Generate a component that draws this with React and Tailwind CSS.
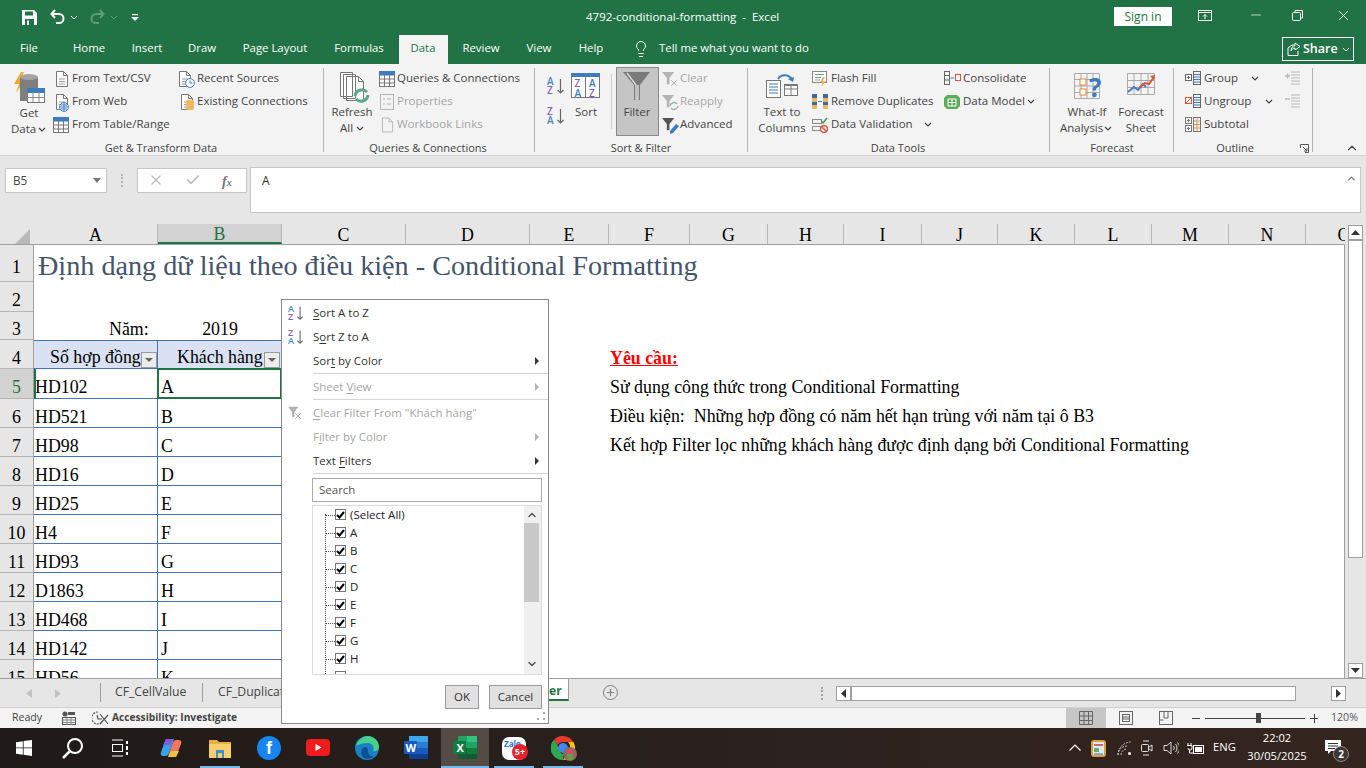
import {
  ChevronDown, ChevronUp, Minus, Plus, X, Lightbulb, Check,
} from 'lucide-react';

const ui = 'font-[Open_Sans,sans-serif]';

// absolute text, vertically centred on its top value
const T = ({ className = '', children }) => (
  <span className={`absolute -translate-y-1/2 whitespace-pre leading-none ${className}`}>{children}</span>
);

const Chev = ({ className = '' }) => (
  <svg className={`absolute ${className}`} width="8" height="5" viewBox="0 0 8 5" fill="none" stroke="#444" strokeWidth="1.2">
    <path d="M1 1l3 3 3-3" />
  </svg>
);

const Sep = ({ className = '' }) => <div className={`absolute top-[68px] h-[84px] w-px bg-[#b3b3b3] ${className}`} />;

const SortIcon = ({ className = '', down = false, size = 20 }) => (
  <svg className={`absolute ${className}`} width={size} height={size} viewBox="0 0 20 20">
    <text x="1" y="9" fontSize="10" fontWeight="600" fontFamily="Open Sans" fill={down ? '#8a5fb5' : '#4a86c5'}>{down ? 'Z' : 'A'}</text>
    <text x="1" y="18" fontSize="10" fontWeight="600" fontFamily="Open Sans" fill={down ? '#4a86c5' : '#8a5fb5'}>{down ? 'A' : 'Z'}</text>
    <path d="M14.5 3v14M11.5 14l3 3 3-3" stroke="#666" strokeWidth="1.2" fill="none" />
  </svg>
);

const Page = ({ className = '' }) => (
  <svg className={`absolute ${className}`} width="14" height="16" viewBox="0 0 14 16" fill="#fff" stroke="#777">
    <path d="M1.5.5h7l4 4v11h-11z" />
    <path d="M8.5.5v4h4" fill="none" />
    <path d="M4 8h6M4 10.5h6M4 13h6" stroke="#999" />
  </svg>
);

const TableIco = ({ className = '', w = 16, h = 16 }) => (
  <svg className={`absolute ${className}`} width={w} height={h} viewBox="0 0 16 16" fill="#fff" stroke="#777">
    <rect x=".5" y=".5" width="15" height="15" />
    <rect x=".5" y=".5" width="15" height="3.5" fill="#3f7cbd" stroke="#3f7cbd" />
    <path d="M.5 8h15M.5 12h15M5.5 4v12M10.5 4v12" />
  </svg>
);

const Funnel = ({ className = '', color = '#7a7a7a', size = 16 }) => (
  <svg className={`absolute ${className}`} width={size} height={size} viewBox="0 0 16 16" fill={color}>
    <path d="M0 1h14L8.5 8v7h-3V8z" />
  </svg>
);

const Ribbon = () => (
  <div className="absolute left-0 top-[64px] h-[92px] w-[1366px] border-b border-[#d2d2d2] bg-[#f3f3f3]" />
);

const RibbonContent = () => (
  <div className={`absolute inset-0 text-[11.500px] text-[#444] ${ui}`}>
    {/* Get & Transform */}
    <svg className="absolute left-[12px] top-[71px]" width="34" height="34" viewBox="0 0 34 34">
      <path d="M9 1L2 13h5l-3 9 9-13H8l4-8z" fill="#f0a830" />
      <path d="M8 6h18v24H8z" fill="#7f7f7f" />
      <ellipse cx="17" cy="6" rx="9" ry="3" fill="#a5a5a5" />
      <rect x="15.500" y="17.500" width="17" height="14" fill="#fff" stroke="#777" />
      <rect x="15.500" y="17.500" width="17" height="4" fill="#3f7cbd" stroke="#3f7cbd" />
      <path d="M15.500 26.500h17M21 21v10M27 21v10" stroke="#888" fill="none" />
    </svg>
    <T className="left-[29px] top-[113px] -translate-x-1/2">Get</T>
    <T className="left-[11px] top-[129px]">Data</T>
    <Chev className="left-[38px] top-[127px]" />
    <Page className="left-[55px] top-[71px]" />
    <T className="left-[72px] top-[78px]">From Text/CSV</T>
    <Page className="left-[55px] top-[94px]" />
    <svg className="absolute left-[59px] top-[102px]" width="10" height="10" viewBox="0 0 10 10" fill="#fff" stroke="#3f7cbd">
      <circle cx="5" cy="5" r="4.400" /><path d="M1 5h8M5 1v8M2 3h6M2 7h6" />
    </svg>
    <T className="left-[72px] top-[101px]">From Web</T>
    <TableIco className="left-[53px] top-[117px]" />
    <T className="left-[72px] top-[124px]">From Table/Range</T>
    <Page className="left-[178px] top-[71px]" />
    <svg className="absolute left-[185px] top-[78px]" width="10" height="10" viewBox="0 0 10 10" fill="#fff" stroke="#3f7cbd">
      <circle cx="5" cy="5" r="4.400" /><path d="M5 2.500V5h2.500" />
    </svg>
    <T className="left-[197px] top-[78px]">Recent Sources</T>
    <Page className="left-[180px] top-[94px]" />
    <svg className="absolute left-[186px] top-[100px]" width="8" height="10" viewBox="0 0 8 10">
      <rect width="8" height="10" rx="2" fill="#f0b860" />
    </svg>
    <T className="left-[197px] top-[101px]">Existing Connections</T>
    <T className="left-[161px] top-[147px] -translate-x-1/2 text-[11px]">Get &amp; Transform Data</T>
    <Sep className="left-[323px]" />

    {/* Queries */}
    <svg className="absolute left-[339px] top-[71px]" width="32" height="34" viewBox="0 0 32 34" fill="#fff" stroke="#777">
      <path d="M1.500 1.500h12v24h-12zM4.500 3.500h12v24h-12zM7.500 5.500h12l5 5v19h-17z" />
      <path d="M19.500 5.500v5h5" fill="none" />
      <path d="M16 25a7 7 0 0 1 12-4M29 24a7 7 0 0 1-12 4" fill="none" stroke="#5aa98a" strokeWidth="3" />
    </svg>
    <T className="left-[352px] top-[112px] -translate-x-1/2">Refresh</T>
    <T className="left-[340px] top-[128px]">All</T>
    <Chev className="left-[356px] top-[126px]" />
    <TableIco className="left-[379px] top-[71px]" />
    <T className="left-[397px] top-[78px]">Queries &amp; Connections</T>
    <svg className="absolute left-[380px] top-[94px]" width="14" height="16" viewBox="0 0 14 16" fill="none" stroke="#b5b5b5">
      <rect x=".5" y=".5" width="13" height="15" />
      <path d="M3 5h2M7 5h4M3 10h2M7 10h4" />
    </svg>
    <T className="left-[397px] top-[101px] text-[#a6a6a6]">Properties</T>
    <svg className="absolute left-[381px] top-[117px]" width="13" height="16" viewBox="0 0 14 16" fill="none" stroke="#b5b5b5">
      <path d="M1.500.5h7l4 4v11h-11z" /><path d="M8.500.5v4h4" />
    </svg>
    <T className="left-[397px] top-[124px] text-[#a6a6a6]">Workbook Links</T>
    <T className="left-[428px] top-[147px] -translate-x-1/2 text-[11px]">Queries &amp; Connections</T>
    <Sep className="left-[534px]" />

    {/* Sort & Filter */}
    <SortIcon className="left-[546px] top-[76px]" />
    <SortIcon down className="left-[546px] top-[106px]" />
    <svg className="absolute left-[571px] top-[73px]" width="29" height="25" viewBox="0 0 29 25">
      <rect x=".5" y=".5" width="28" height="24" fill="#fff" stroke="#777" />
      <rect x="0" y="0" width="29" height="4" fill="#3f7cbd" />
      <path d="M14.500 4v21" stroke="#777" />
      <text x="3.500" y="14" fontSize="10" fontWeight="600" fontFamily="Open Sans" fill="#8a5fb5">Z</text>
      <text x="3.500" y="24" fontSize="10" fontWeight="600" fontFamily="Open Sans" fill="#3f7cbd">A</text>
      <text x="18" y="14" fontSize="10" fontWeight="600" fontFamily="Open Sans" fill="#3f7cbd">A</text>
      <text x="18" y="24" fontSize="10" fontWeight="600" fontFamily="Open Sans" fill="#8a5fb5">Z</text>
    </svg>
    <T className="left-[586px] top-[112px] -translate-x-1/2">Sort</T>
    <div className="absolute left-[611px] top-[74px] h-[55px] w-px bg-[#d0d0d0]" />
    <div className="absolute left-[616px] top-[67px] h-[69px] w-[43px] border border-[#8a8a8a] bg-[#c5c5c5]" />
    <svg className="absolute left-[622px] top-[71px]" width="30" height="29" viewBox="0 0 30 29">
      <path d="M1 1h27L18 14v15h-6V14z" fill="#7a7a7a" />
      <path d="M5 2l9 12v14h2V14" stroke="#d8d8d8" strokeWidth="1.500" fill="none" />
    </svg>
    <T className="left-[637px] top-[112px] -translate-x-1/2">Filter</T>
    <Funnel color="#b3b3b3" size={14} className="left-[662px] top-[71px]" />
    <X className="absolute left-[669px] top-[78px]" size={10} color="#a0a0a0" />
    <T className="left-[680px] top-[78px] text-[#a6a6a6]">Clear</T>
    <Funnel color="#b3b3b3" size={14} className="left-[662px] top-[94px]" />
    <svg className="absolute left-[669px] top-[101px]" width="10" height="10" viewBox="0 0 10 10" fill="none" stroke="#9db5ac" strokeWidth="1.500">
      <path d="M1 5a4 4 0 0 1 7-2M9 5a4 4 0 0 1-7 2" />
    </svg>
    <T className="left-[680px] top-[101px] text-[#a6a6a6]">Reapply</T>
    <Funnel color="#555" size={14} className="left-[662px] top-[117px]" />
    <svg className="absolute left-[669px] top-[123px]" width="11" height="11" viewBox="0 0 11 11" fill="#3f7cbd">
      <path d="M1 8l6-7 3 2-6 7-3 1z" />
    </svg>
    <T className="left-[680px] top-[124px]">Advanced</T>
    <T className="left-[641px] top-[147px] -translate-x-1/2 text-[11px]">Sort &amp; Filter</T>
    <Sep className="left-[747px]" />

    {/* Data Tools */}
    <svg className="absolute left-[766px] top-[71px]" width="33" height="27" viewBox="0 0 33 27" fill="none">
      <path d="M12 8a8 8 0 0 1 14 1" stroke="#3f7cbd" strokeWidth="2" />
      <path d="M22 8l5 3 1-5z" fill="#3f7cbd" />
      <rect x=".5" y="9.500" width="14" height="17" fill="#fff" stroke="#777" />
      <path d="M3 13h9M3 16h9M3 19h9M3 22h9" stroke="#3f7cbd" />
      <rect x="18.500" y="13.500" width="13" height="11" fill="#fff" stroke="#777" />
      <path d="M18 18h14M25 14v10" stroke="#777" />
      <rect x="18" y="13" width="14" height="2" fill="#777" />
    </svg>
    <T className="left-[782px] top-[112px] -translate-x-1/2">Text to</T>
    <T className="left-[782px] top-[128px] -translate-x-1/2">Columns</T>
    <svg className="absolute left-[812px] top-[71px]" width="16" height="16" viewBox="0 0 16 16" fill="none" stroke="#888">
      <rect x=".5" y=".5" width="14" height="11" fill="#fff" />
      <path d="M3 3.500h9M3 6.500h6M3 9h5" stroke="#6ea47f" />
      <path d="M11 6l-3 5h2.500L9 16l5-6h-3l2-4z" fill="#f0b860" stroke="none" />
    </svg>
    <T className="left-[831px] top-[78px]">Flash Fill</T>
    <svg className="absolute left-[812px] top-[94px]" width="16" height="15" viewBox="0 0 16 15">
      <rect width="5" height="15" fill="#e8b868" />
      <rect x="11" width="5" height="15" fill="#e8b868" />
      <rect width="5" height="4" fill="#3f6a9c" />
      <rect x="11" width="5" height="4" fill="#3f6a9c" />
      <rect y="8" width="5" height="3" fill="#3f6a9c" />
      <rect x="11" y="8" width="5" height="3" fill="#3f6a9c" />
      <path d="M6 7.500h4" stroke="#3f7cbd" />
    </svg>
    <T className="left-[831px] top-[101px]">Remove Duplicates</T>
    <svg className="absolute left-[812px] top-[117px]" width="16" height="16" viewBox="0 0 16 16" fill="none">
      <rect x=".5" y="2.500" width="9" height="4" stroke="#888" />
      <rect x=".5" y="9.500" width="8" height="4" stroke="#888" />
      <path d="M9 4l2 2 4-5" stroke="#3d9a6a" strokeWidth="1.500" />
      <circle cx="12" cy="12" r="3.500" stroke="#d9573b" strokeWidth="1.500" />
      <path d="M9.500 9.500l5 5" stroke="#d9573b" strokeWidth="1.500" />
    </svg>
    <T className="left-[831px] top-[124px]">Data Validation</T>
    <Chev className="left-[924px] top-[122px]" />
    <svg className="absolute left-[944px] top-[71px]" width="17" height="14" viewBox="0 0 17 14" fill="none">
      <rect x=".5" y=".5" width="5" height="13" stroke="#666" />
      <path d="M1 4.500h4M1 9h4" stroke="#666" />
      <path d="M6.500 7H10" stroke="#3f7cbd" />
      <rect x="11.500" y="3.500" width="5" height="6" stroke="#d9573b" />
    </svg>
    <T className="left-[963px] top-[78px]">Consolidate</T>
    <svg className="absolute left-[944px] top-[94px]" width="16" height="16" viewBox="0 0 16 16">
      <path d="M3 1h10l3 3v8l-3 3H3l-3-3V4z" fill="#5cae5c" />
      <path d="M4 5h8v7H4zM8 5v7M4 8.500h8" stroke="#fff" fill="none" />
    </svg>
    <T className="left-[963px] top-[101px]">Data Model</T>
    <Chev className="left-[1027px] top-[99px]" />
    <T className="left-[898px] top-[147px] -translate-x-1/2 text-[11px]">Data Tools</T>
    <Sep className="left-[1049px]" />

    {/* Forecast */}
    <svg className="absolute left-[1074px] top-[73px]" width="30" height="27" viewBox="0 0 30 27" fill="none">
      <path d="M.5.500h25v25H.5zM.5 6.500h25M.5 13h25M.5 19.500h25M7 .5v25M13 .5v25M19 .5v25" stroke="#aaa" />
      <rect x="6" y="6" width="6" height="6" stroke="#e8893a" fill="#fff" />
      <rect x="6" y="16" width="6" height="6" stroke="#e8893a" fill="#fff" />
      <text x="15" y="24" fontSize="26" fontWeight="700" fontFamily="Open Sans" fill="#3f7cbd">?</text>
    </svg>
    <T className="left-[1087px] top-[112px] -translate-x-1/2">What-If</T>
    <T className="left-[1060px] top-[128px]">Analysis</T>
    <Chev className="left-[1104px] top-[126px]" />
    <svg className="absolute left-[1127px] top-[73px]" width="29" height="26" viewBox="0 0 29 26" fill="none">
      <path d="M.5.500h27v21H.5zM.5 7.500h27M.5 14.500h27M7 .5v21M14 .5v21M21 .5v21" stroke="#aaa" />
      <path d="M1 19l6-5 4 3 5-6 3 3" stroke="#3f7cbd" strokeWidth="2" />
      <path d="M12 15l6-5 4 1 5-7" stroke="#d9573b" strokeWidth="2" />
      <path d="M23 3l5-1-1 5z" fill="#d9573b" />
    </svg>
    <T className="left-[1141px] top-[112px] -translate-x-1/2">Forecast</T>
    <T className="left-[1141px] top-[128px] -translate-x-1/2">Sheet</T>
    <T className="left-[1112px] top-[147px] -translate-x-1/2 text-[11px]">Forecast</T>
    <Sep className="left-[1173px]" />

    {/* Outline */}
    <svg className="absolute left-[1185px] top-[71px]" width="16" height="14" viewBox="0 0 16 14" fill="none">
      <rect x=".5" y="3.500" width="6" height="6" stroke="#666" />
      <path d="M2 6.500h3M3.500 5v3" stroke="#666" />
      <rect x="8.500" y=".5" width="7" height="13" stroke="#666" />
      <path d="M9 3.500h6M9 6h6M9 8.500h6M9 11h6" stroke="#3f7cbd" />
    </svg>
    <T className="left-[1204px] top-[78px]">Group</T>
    <Chev className="left-[1251px] top-[76px]" />
    <svg className="absolute left-[1185px] top-[94px]" width="16" height="14" viewBox="0 0 16 14" fill="none">
      <rect x=".5" y="3.500" width="6" height="6" stroke="#d9573b" />
      <path d="M1 9l5-5" stroke="#d9573b" />
      <rect x="8.500" y=".5" width="7" height="13" stroke="#666" />
      <path d="M9 3.500h6M9 6h6M9 8.500h6M9 11h6" stroke="#3f7cbd" />
    </svg>
    <T className="left-[1204px] top-[101px]">Ungroup</T>
    <Chev className="left-[1265px] top-[99px]" />
    <svg className="absolute left-[1185px] top-[117px]" width="16" height="15" viewBox="0 0 16 15" fill="none" stroke="#777">
      <rect x=".5" y=".5" width="6" height="6" />
      <rect x=".5" y="8.500" width="6" height="6" />
      <path d="M2 3.500h3M3.500 2v3M2 11.500h3M3.500 10v3" />
      <rect x="8.500" y=".5" width="7" height="14" />
      <path d="M9 4h6M9 7.500h6M9 11h6M12 1v13" stroke="#d99a55" />
    </svg>
    <T className="left-[1204px] top-[124px]">Subtotal</T>
    <svg className="absolute left-[1285px] top-[71px]" width="16" height="14" viewBox="0 0 16 14" fill="none" stroke="#b8b8b8">
      <path d="M6 1h9M6 4h9M6 7h9M6 10h9M6 13h9" />
      <path d="M0 5h5M2.500 2.500v5" strokeWidth="1.500" />
    </svg>
    <svg className="absolute left-[1285px] top-[94px]" width="16" height="14" viewBox="0 0 16 14" fill="none" stroke="#b8b8b8">
      <path d="M6 1h9M6 4h9M6 7h9M6 10h9M6 13h9" />
      <path d="M0 5h5" strokeWidth="1.500" />
    </svg>
    <T className="left-[1235px] top-[147px] -translate-x-1/2 text-[11px]">Outline</T>
    <svg className="absolute left-[1300px] top-[144px]" width="9" height="9" viewBox="0 0 9 9" fill="none" stroke="#555">
      <path d="M.5 4V.5h8v8H5M3 3l4 4M7 4v3H4" />
    </svg>
    <Sep className="left-[1312px]" />
    <ChevronUp className="absolute left-[1345px] top-[141px]" size={14} color="#444" />
  </div>
);

const TitleBar = () => (
  <div className={`absolute left-0 top-0 h-[64px] w-[1366px] bg-[#217346] text-white ${ui}`}>
    <svg className="absolute left-[22px] top-[10px]" width="15" height="15" viewBox="0 0 15 15">
      <path d="M0 0h12l3 3v12H0z" fill="#fff" />
      <rect x="3" y="1.500" width="8" height="4" fill="#217346" />
      <rect x="3" y="9" width="9" height="6" fill="#217346" />
      <rect x="5" y="10.500" width="2" height="4.500" fill="#fff" />
    </svg>
    <svg className="absolute left-[50px] top-[9px]" width="15" height="16" viewBox="0 0 15 16" fill="none" stroke="#fff" strokeWidth="2">
      <path d="M5 1L1.500 5 5 9M2 5h7a4.500 4.500 0 0 1 0 9H6" />
    </svg>
    <svg className="absolute left-[70px] top-[15px]" width="8" height="5" viewBox="0 0 8 5" fill="none" stroke="#fff">
      <path d="M1 1l3 3 3-3" />
    </svg>
    <svg className="absolute left-[90px] top-[9px]" width="15" height="16" viewBox="0 0 15 16" fill="none" stroke="#5f9c7c" strokeWidth="2">
      <path d="M10 1l3.500 4L10 9M13 5H6a4.500 4.500 0 0 0 0 9h3" />
    </svg>
    <svg className="absolute left-[110px] top-[15px]" width="8" height="5" viewBox="0 0 8 5" fill="none" stroke="#5f9c7c">
      <path d="M1 1l3 3 3-3" />
    </svg>
    <svg className="absolute left-[131px] top-[14px]" width="8" height="8" viewBox="0 0 8 8" fill="#fff">
      <rect x="1" width="6" height="1.200" /><path d="M0 3h8L4 7z" />
    </svg>
    <T className="left-[586px] top-[17px] text-[11.500px]">4792-conditional-formatting  -  Excel</T>
    <div className="absolute left-[1114px] top-[7px] flex h-[19px] w-[58px] items-center justify-center bg-white text-[12px] text-[#217346]">Sign in</div>
    <svg className="absolute left-[1198px] top-[10px]" width="14" height="11" viewBox="0 0 14 11" fill="none" stroke="#fff">
      <rect x=".5" y=".5" width="13" height="10" /><path d="M0 2.500h14M7 9V4.500M5 6.500l2-2 2 2" />
    </svg>
    <Minus className="absolute left-[1248px] top-[7px]" size={16} strokeWidth={1} />
    <svg className="absolute left-[1292px] top-[10px]" width="11" height="11" viewBox="0 0 11 11" fill="none" stroke="#fff">
      <rect x=".5" y="2.500" width="8" height="8" rx="1" /><path d="M3 2V.5h7.500V8H9" />
    </svg>
    <X className="absolute left-[1335px] top-[7px]" size={17} strokeWidth={1.2} />

    <div className="absolute left-[399px] top-[35px] h-[29px] w-[49px] bg-[#f3f3f3]" />
    <div className="text-[11.400px]">
      <T className="left-[29px] top-[48px] -translate-x-1/2">File</T>
      <T className="left-[89px] top-[48px] -translate-x-1/2">Home</T>
      <T className="left-[147px] top-[48px] -translate-x-1/2">Insert</T>
      <T className="left-[202px] top-[48px] -translate-x-1/2">Draw</T>
      <T className="left-[275px] top-[48px] -translate-x-1/2">Page Layout</T>
      <T className="left-[359px] top-[48px] -translate-x-1/2">Formulas</T>
      <T className="left-[423px] top-[48px] -translate-x-1/2 text-[#217346]">Data</T>
      <T className="left-[481px] top-[48px] -translate-x-1/2">Review</T>
      <T className="left-[539px] top-[48px] -translate-x-1/2">View</T>
      <T className="left-[591px] top-[48px] -translate-x-1/2">Help</T>
      <T className="left-[659px] top-[48px]">Tell me what you want to do</T>
    </div>
    <Lightbulb className="absolute left-[632px] top-[40px]" size={18} strokeWidth={1.3} />
    <div className="absolute left-[1282px] top-[37px] h-[24px] w-[72px] border border-white" />
    <svg className="absolute left-[1287px] top-[42px]" width="15" height="14" viewBox="0 0 15 14" fill="none" stroke="#fff">
      <path d="M1 6v7.500h10V9M1 6l4-3h2M8 1l5 3.500L8 8V6c-2 0-3 1-4 3 0-3 1.500-5 4-5.500z" />
    </svg>
    <T className="left-[1303px] top-[49px] text-[12.500px] font-semibold">Share</T>
    <svg className="absolute left-[1342px] top-[47px]" width="8" height="5" viewBox="0 0 8 5" fill="none" stroke="#fff">
      <path d="M1 1l3 3 3-3" />
    </svg>
  </div>
);

const FormulaBar = () => (
  <div className={`absolute left-0 top-[157px] h-[67px] w-[1366px] bg-[#e6e6e6] ${ui}`}>
    <div className="absolute left-[5px] top-[11px] flex h-[25px] w-[102px] items-center border border-[#c6c6c6] bg-white pl-[7px] text-[11.700px] text-[#444]">B5</div>
    <svg className="absolute left-[93px] top-[21px]" width="8" height="5" viewBox="0 0 8 5" fill="#777"><path d="M0 0h8L4 5z" /></svg>
    <div className="absolute left-[121px] top-[17px] h-[13px] w-[2px] border-l-2 border-dotted border-[#b5b5b5]" />
    <div className="absolute left-[137px] top-[11px] h-[25px] w-[110px] border border-[#c6c6c6] bg-white" />
    <X className="absolute left-[148px] top-[15px]" size={16} color="#bdbdbd" strokeWidth={2} />
    <Check className="absolute left-[185px] top-[15px]" size={16} color="#bdbdbd" strokeWidth={2.500} />
    <span className="absolute left-[222px] top-[14px] font-[Liberation_Serif,serif] text-[14px] font-bold italic text-[#777]">f<span className="text-[10px]">x</span></span>
    <div className="absolute left-[250px] top-[10px] h-[46px] w-[1111px] border border-[#c6c6c6] bg-white" />
    <T className="left-[262px] top-[24px] text-[12px] text-[#333]">A</T>
    <ChevronUp className="absolute left-[1346px] top-[16px]" size={11} color="#777" strokeWidth={3} />
  </div>
);

const columns = [
  { id: 'A', w: 'w-[124px]' }, { id: 'B', w: 'w-[124px]' }, { id: 'C', w: 'w-[124px]' }, { id: 'D', w: 'w-[124px]' },
  { id: 'E', w: 'w-[79px]' }, { id: 'F', w: 'w-[81px]' }, { id: 'G', w: 'w-[78px]' }, { id: 'H', w: 'w-[76px]' },
  { id: 'I', w: 'w-[78px]' }, { id: 'J', w: 'w-[76px]' }, { id: 'K', w: 'w-[77px]' }, { id: 'L', w: 'w-[77px]' },
  { id: 'M', w: 'w-[77px]' }, { id: 'N', w: 'w-[77px]' }, { id: 'O', w: 'w-[77px]' },
];

const rowHeads = [
  { n: 1, h: 'h-[37px]' }, { n: 2, h: 'h-[30px]' }, { n: 3, h: 'h-[28px]' }, { n: 4, h: 'h-[29px]' }, { n: 5, h: 'h-[30px]' },
  { n: 6, h: 'h-[29px]' }, { n: 7, h: 'h-[29px]' }, { n: 8, h: 'h-[29px]' }, { n: 9, h: 'h-[29px]' }, { n: 10, h: 'h-[29px]' },
  { n: 11, h: 'h-[29px]' }, { n: 12, h: 'h-[29px]' }, { n: 13, h: 'h-[29px]' }, { n: 14, h: 'h-[29px]' }, { n: 15, h: 'h-[29px]' },
];

const tableRows = [
  ['HD102', 'A'], ['HD521', 'B'], ['HD98', 'C'], ['HD16', 'D'], ['HD25', 'E'], ['H4', 'F'],
  ['HD93', 'G'], ['D1863', 'H'], ['HD468', 'I'], ['HD142', 'J'], ['HD56', 'K'],
];

const FilterBtn = ({ className = '' }) => (
  <div className={`absolute top-[128px] flex h-[16px] w-[16px] items-center justify-center border border-[#9a9a9a] bg-[#ececec] ${className}`}>
    <svg width="8" height="4" viewBox="0 0 8 4" fill="#666"><path d="M0 0h8L4 4z" /></svg>
  </div>
);

const Sheet = () => (
  <div className="absolute left-0 top-[224px] h-[455px] w-[1366px] overflow-hidden bg-[#e6e6e6] font-[Liberation_Serif,serif] text-[17.850px] text-black">
    {/* headers */}
    <div className="absolute left-0 top-0 flex h-[21px] w-[1345px] overflow-hidden border-b border-[#9f9f9f] pl-[34px]">
      {columns.map((c) => (
        <div key={c.id} className={`flex shrink-0 items-center justify-center border-r border-[#b5b5b5] pt-[2px] ${c.w} ${c.id === 'B' ? 'border-b-2 border-b-[#217346] bg-[#d2d2d2] text-[#217346]' : ''}`}>
          {c.id}
        </div>
      ))}
    </div>
    <svg className="absolute left-[15px] top-[5px]" width="15" height="15" viewBox="0 0 15 15" fill="#b9b9b9"><path d="M15 0v15H0z" /></svg>
    <div className="absolute left-0 top-[21px] w-[34px] border-r border-[#9f9f9f]">
      {rowHeads.map((r) => (
        <div key={r.n} className={`flex items-center justify-center border-b border-[#b5b5b5] pt-[8px] ${r.h} ${r.n === 5 ? 'bg-[#d2d2d2] text-[#217346]' : ''}`}>
          {r.n}
        </div>
      ))}
    </div>

    {/* white sheet */}
    <div className="absolute left-[34px] top-[21px] h-[434px] w-[1311px] overflow-hidden border-r border-[#9f9f9f] bg-white">
      <span className="absolute left-[4px] top-[7px] whitespace-pre text-[28.200px] leading-none text-[#44546a]">Định dạng dữ liệu theo điều kiện - Conditional Formatting</span>
      <span className="absolute left-[75px] top-[76px] whitespace-pre leading-none">Năm:</span>
      <span className="absolute left-[124px] top-[76px] w-[124px] text-center leading-none">2019</span>

      <div className="absolute left-0 top-[95px] w-[248px]">
        <div className="flex h-[29px] border-y border-[#4472c4] bg-[#d9e1f2]">
          <div className="w-[124px] overflow-hidden whitespace-pre border-r border-[#4472c4] pl-[16px] pt-[5px] leading-[22px]">Số hợp đồng</div>
          <div className="w-[124px] whitespace-pre pl-[19px] pt-[5px] leading-[22px]">Khách hàng</div>
        </div>
        {tableRows.map(([a, b], i) => (
          <div key={a} className={`flex border-b border-[#4472c4] ${i === 0 ? 'h-[30px]' : 'h-[29px]'}`}>
            <div className="w-[124px] border-r border-[#4472c4] pl-[1px] pt-[7px] leading-[22px]">{a}</div>
            <div className="w-[124px] pl-[3px] pt-[7px] leading-[22px]">{b}</div>
          </div>
        ))}
      </div>
      <div className="absolute left-[123px] top-[123px] h-[31px] w-[125px] border-2 border-[#217346]" />
      <div className="absolute left-0 top-[124px] h-[30px] w-[2px] bg-[#217346]" />

      <span className="absolute left-[576px] top-[105px] whitespace-pre font-bold leading-none text-[#ff0000] underline">Yêu cầu:</span>
      <span className="absolute left-[576px] top-[134px] whitespace-pre leading-none">Sử dụng công thức trong Conditional Formatting</span>
      <span className="absolute left-[576px] top-[163px] whitespace-pre leading-none">Điều kiện:  Những hợp đồng có năm hết hạn trùng với năm tại ô B3</span>
      <span className="absolute left-[576px] top-[192px] whitespace-pre leading-none">Kết hợp Filter lọc những khách hàng được định dạng bởi Conditional Formatting</span>
    </div>
    <FilterBtn className="left-[141px]" />
    <FilterBtn className="left-[264px]" />

    {/* vertical scrollbar */}
    <div className="absolute left-[1348px] top-[1px] flex h-[15px] w-[15px] items-center justify-center border border-[#9f9f9f] bg-white">
      <svg width="9" height="5" viewBox="0 0 9 5" fill="#333"><path d="M0 5h9L4.500 0z" /></svg>
    </div>
    <div className="absolute left-[1348px] top-[16px] h-[318px] w-[15px] border border-[#9f9f9f] bg-white" />
    <div className="absolute bottom-[1px] left-[1348px] flex h-[15px] w-[15px] items-center justify-center border border-[#9f9f9f] bg-white">
      <svg width="9" height="5" viewBox="0 0 9 5" fill="#333"><path d="M0 0h9L4.500 5z" /></svg>
    </div>
  </div>
);

const TabBar = () => (
  <div className={`absolute left-0 top-[678px] h-[29px] w-[1366px] border-t border-[#9f9f9f] bg-[#e6e6e6] text-[12.200px] text-[#444] ${ui}`}>
    <svg className="absolute left-[26px] top-[10px]" width="6" height="9" viewBox="0 0 6 9" fill="#c2c2c2"><path d="M6 0v9L0 4.500z" /></svg>
    <svg className="absolute left-[55px] top-[10px]" width="6" height="9" viewBox="0 0 6 9" fill="#c2c2c2"><path d="M0 0v9l6-4.500z" /></svg>
    <div className="absolute left-[100px] top-[4px] h-[19px] w-px bg-[#9f9f9f]" />
    <T className="left-[115px] top-[13px]">CF_CellValue</T>
    <div className="absolute left-[202px] top-[4px] h-[19px] w-px bg-[#9f9f9f]" />
    <T className="left-[218px] top-[13px]">CF_Duplicat</T>
    <div className="absolute left-[540px] top-0 h-[22px] w-[29px] border-b-2 border-r border-b-[#217346] border-r-[#9f9f9f] bg-white" />
    <T className="left-[549px] top-[12px] font-bold text-[#217346]">er</T>
    <div className="absolute left-[603px] top-[6px] flex h-[15px] w-[15px] items-center justify-center rounded-full border border-[#7f7f7f]">
      <Plus size={11} color="#7f7f7f" strokeWidth={2.500} />
    </div>
    <div className="absolute left-[821px] top-[8px] h-[13px] w-[2px] border-l-2 border-dotted border-[#a0a0a0]" />
    <div className="absolute left-[836px] top-[7px] flex h-[15px] w-[15px] items-center justify-center border border-[#9f9f9f] bg-white">
      <svg width="5" height="9" viewBox="0 0 5 9" fill="#333"><path d="M5 0v9L0 4.500z" /></svg>
    </div>
    <div className="absolute left-[851px] top-[7px] h-[15px] w-[445px] border border-[#9f9f9f] bg-white" />
    <div className="absolute left-[1331px] top-[7px] flex h-[15px] w-[15px] items-center justify-center border border-[#9f9f9f] bg-white">
      <svg width="5" height="9" viewBox="0 0 5 9" fill="#333"><path d="M0 0v9l5-4.500z" /></svg>
    </div>
  </div>
);

const StatusBar = () => (
  <div className={`absolute left-0 top-[707px] h-[21px] w-[1366px] border-t border-[#d0d0d0] bg-[#f3f3f3] text-[10.600px] text-[#444] ${ui}`}>
    <T className="left-[12px] top-[9px]">Ready</T>
    <svg className="absolute left-[62px] top-[3px]" width="14" height="14" viewBox="0 0 14 14" fill="none">
      <circle cx="3" cy="3" r="2.500" fill="#555" />
      <rect x="6" y="1" width="7" height="3" fill="#555" />
      <rect x=".5" y="6.500" width="13" height="7" stroke="#555" />
      <path d="M1 9h12M1 11.500h12M5 7v7M9 7v7" stroke="#888" />
    </svg>
    <svg className="absolute left-[92px] top-[2px]" width="17" height="16" viewBox="0 0 17 16" fill="none" stroke="#555" strokeWidth="1.200">
      <path d="M6 2a6 6 0 1 0 3 11" strokeDasharray="2 1" />
      <path d="M5 5l1 4h4M8 4l8 10M16 5l-8 9" />
    </svg>
    <T className="left-[112px] top-[9px] text-[10.200px] font-bold">Accessibility: Investigate</T>
    <div className="absolute left-[1066px] top-0 h-[20px] w-[40px] bg-[#c6c6c6]" />
    <svg className="absolute left-[1079px] top-[3px]" width="14" height="14" viewBox="0 0 14 14" fill="none" stroke="#666">
      <path d="M.5.500h13v13H.5zM.5 5h13M.5 9.500h13M5 .5v13M9.500 .5v13" />
    </svg>
    <svg className="absolute left-[1119px] top-[3px]" width="14" height="14" viewBox="0 0 14 14" fill="none" stroke="#666">
      <rect x=".5" y=".5" width="13" height="13" /><rect x="3.500" y="3.500" width="7" height="7" /><path d="M4 6h6M4 8h6" />
    </svg>
    <svg className="absolute left-[1159px] top-[3px]" width="14" height="14" viewBox="0 0 14 14" fill="none" stroke="#666">
      <rect x=".5" y=".5" width="13" height="13" /><path d="M5 .5V7h4V.5M.5 9h4" />
    </svg>
    <div className="absolute left-[1192px] top-[10px] h-px w-[8px] bg-[#444]" />
    <div className="absolute left-[1205px] top-[10px] h-px w-[100px] bg-[#444]" />
    <div className="absolute left-[1256px] top-[5px] h-[10px] w-[5px] bg-[#444]" />
    <div className="absolute left-[1310px] top-[10px] h-px w-[8px] bg-[#444]" />
    <div className="absolute left-[1314px] top-[6px] h-[9px] w-px bg-[#444]" />
    <T className="left-[1331px] top-[9px] text-[#555]">120%</T>
  </div>
);

const MenuItem = ({ label, disabled, arrow, h = 'h-[24px]' }) => (
  <div className={`relative flex items-center pl-[31px] ${h} ${disabled ? 'text-[#a6a6a6]' : 'text-[#333]'}`}>
    {label}
    {arrow && (
      <svg className="absolute left-[253px] top-1/2 -translate-y-1/2" width="4" height="8" viewBox="0 0 4 8" fill={disabled ? '#b5b5b5' : '#333'}>
        <path d="M0 0l4 4-4 4z" />
      </svg>
    )}
  </div>
);

const U = ({ children }) => <span className="underline underline-offset-2">{children}</span>;

const listItems = ['(Select All)', 'A', 'B', 'C', 'D', 'E', 'F', 'G', 'H', ''];

const FilterMenu = () => (
  <div className={`absolute left-[281px] top-[299px] h-[425px] w-[268px] border border-[#8a8a8a] bg-white text-[11.500px] ${ui}`}>
    <div className="absolute left-0 top-[1px] w-full">
      <MenuItem label={<span><U>S</U>ort A to Z</span>} />
      <MenuItem label={<span>S<U>o</U>rt Z to A</span>} />
      <MenuItem label={<span>Sor<U>t</U> by Color</span>} arrow />
      <div className="ml-[31px] h-px bg-[#d5d5d5]" />
      <MenuItem label={<span>Sheet <U>V</U>iew</span>} disabled arrow h="h-[25px]" />
      <div className="ml-[31px] h-px bg-[#d5d5d5]" />
      <MenuItem label={<span><U>C</U>lear Filter From "Khách hàng"</span>} disabled h="h-[25px]" />
      <MenuItem label={<span>F<U>i</U>lter by Color</span>} disabled arrow />
      <MenuItem label={<span>Text <U>F</U>ilters</span>} arrow />
      <div className="ml-[31px] h-px bg-[#d5d5d5]" />
    </div>
    <SortIcon size={18} className="left-[5px] top-[4px]" />
    <SortIcon size={18} down className="left-[5px] top-[28px]" />
    <Funnel color="#b3b3b3" size={12} className="left-[6px] top-[106px]" />
    <X className="absolute left-[11px] top-[111px]" size={10} color="#9f9f9f" />

    <div className="absolute left-[30px] top-[178px] flex h-[24px] w-[230px] items-center border border-[#ababab] pl-[6px] text-[#555]">Search</div>

    <div className="absolute left-[30px] top-[205px] h-[170px] w-[230px] overflow-hidden border border-[#dcdcdc]">
      <div className="absolute left-[12px] top-[8px] h-[162px] border-l border-dotted border-[#555]" />
      <div className="absolute left-0 top-0 w-[212px]">
        {listItems.map((item, i) => (
          <div key={i} className="relative h-[18px] pl-[37px] text-[#222]">
            <div className="absolute left-[13px] top-[9px] w-[9px] border-t border-dotted border-[#555]" />
            <div className="absolute left-[22px] top-[3px] flex h-[11px] w-[11px] items-center justify-center border border-[#777] bg-white">
              {item && (
                <svg width="9" height="8" viewBox="0 0 9 8" fill="none" stroke="#000" strokeWidth="2"><path d="M1 4l2.500 2.500L8 1" /></svg>
              )}
            </div>
            <span className="leading-[17px]">{item}</span>
          </div>
        ))}
      </div>
      <div className="absolute right-0 top-0 h-full w-[17px] bg-[#f0f0f0]">
        <ChevronUp className="absolute left-[2px] top-[3px]" size={12} color="#555" strokeWidth={3} />
        <div className="absolute left-0 top-[17px] h-[79px] w-[15px] bg-[#c8c8c8]" />
        <ChevronDown className="absolute left-[2px] top-[152px]" size={12} color="#555" strokeWidth={3} />
      </div>
    </div>

    <div className="absolute left-[163px] top-[385px] flex h-[24px] w-[34px] items-center justify-center border border-[#9a9a9a] bg-[#e1e1e1] text-[#333]">OK</div>
    <div className="absolute left-[207px] top-[385px] flex h-[24px] w-[53px] items-center justify-center border border-[#9a9a9a] bg-[#e1e1e1] text-[#333]">Cancel</div>
    <svg className="absolute left-[255px] top-[412px]" width="9" height="9" viewBox="0 0 9 9" fill="#aaa">
      <rect x="6" width="2" height="2" /><rect y="6" width="2" height="2" /><rect x="6" y="6" width="2" height="2" />
    </svg>
  </div>
);

const Taskbar = () => (
  <div className={`absolute left-0 top-[728px] h-[40px] w-[1366px] bg-gradient-to-r from-[#1f1a18] via-[#2a211e] to-[#35251f] text-white ${ui}`}>
    <svg className="absolute left-[16px] top-[12px]" width="16" height="16" viewBox="0 0 16 16" fill="#fff">
      <path d="M0 2.200l6.800-1v6.300H0zM7.600 1l8.400-1v7.500H7.600zM0 8.300h6.800v6.500L0 13.800zM7.600 8.300H16V16l-8.400-1.200z" />
    </svg>
    <svg className="absolute left-[61px] top-[9px]" width="23" height="23" viewBox="0 0 23 23" fill="none" stroke="#fff" strokeWidth="2">
      <circle cx="14" cy="9" r="7" /><path d="M9 14l-7 7" strokeWidth="2.500" />
    </svg>
    <svg className="absolute left-[111px] top-[11px]" width="18" height="18" viewBox="0 0 18 18" fill="none" stroke="#fff">
      <path d="M1 1h11M1 17h11" /><rect x="1.500" y="5.500" width="10" height="7" /><path d="M16 2v3M16 7v4M16 13v3" strokeWidth="2" />
    </svg>
    {/* copilot */}
    <svg className="absolute left-[160px] top-[9px]" width="22" height="22" viewBox="0 0 22 22">
      <path d="M6 2h8l-4 12c-.5 2-2 5-4 5H3c-2 0-3-2-2-4z" fill="#3aa0e8" />
      <path d="M6 2h8l-3 6H3z" fill="#7a5fd8" />
      <path d="M16 20H8l4-12c.5-2 2-5 4-5h3c2 0 3 2 2 4z" fill="#f0785a" />
      <path d="M16 20H8l3-6h8z" fill="#f0c040" />
    </svg>
    {/* explorer */}
    <svg className="absolute left-[209px] top-[10px]" width="22" height="20" viewBox="0 0 22 20">
      <path d="M0 2h8l2 2h12v16H0z" fill="#e8b040" />
      <rect y="6" width="22" height="14" fill="#f6cf6a" />
      <rect x="7" y="12" width="8" height="8" fill="#3a8fd0" />
      <rect x="9" y="15" width="4" height="5" fill="#f6cf6a" />
    </svg>
    <div className="absolute left-[200px] top-[38px] h-[2px] w-[40px] bg-[#76b9ed]" />
    {/* facebook */}
    <div className="absolute left-[257px] top-[8px] flex h-[24px] w-[24px] items-center justify-center rounded-full bg-[#1685f0] font-[Liberation_Sans,sans-serif] text-[18px] font-bold leading-none">f</div>
    {/* youtube */}
    <svg className="absolute left-[306px] top-[11px]" width="24" height="17" viewBox="0 0 24 17">
      <rect width="24" height="17" rx="4" fill="#ee1c1c" /><path d="M9.500 5l6 3.500-6 3.500z" fill="#fff" />
    </svg>
    {/* edge */}
    <svg className="absolute left-[355px] top-[8px]" width="24" height="24" viewBox="0 0 24 24">
      <circle cx="12" cy="12" r="12" fill="#1b7fc4" />
      <path d="M1 10C3 3 9 0 13 0c6 0 11 5 11 11 0 3-3 5-6 4 2-4-1-8-5-8-5 0-9 1-12 3z" fill="#47d08a" />
      <path d="M13 15c0 3 2 6 6 5-3 3-8 4-11 1s-2-9 2-10c2 0 3 2 3 4z" fill="#0c4f94" />
    </svg>
    {/* word */}
    <svg className="absolute left-[404px] top-[8px]" width="24" height="23" viewBox="0 0 24 23">
      <rect x="5" width="19" height="23" rx="1" fill="#2b7cd3" />
      <rect x="5" width="19" height="6" fill="#41a5ee" />
      <rect x="5" y="12" width="19" height="6" fill="#185abd" />
      <rect x="5" y="18" width="19" height="5" fill="#103f91" />
      <rect y="5" width="13" height="13" rx="1" fill="#185abd" />
      <text x="1.500" y="15.500" fontSize="11" fontWeight="700" fontFamily="Open Sans" fill="#fff">W</text>
    </svg>
    {/* excel */}
    <div className="absolute left-[441px] top-0 h-[40px] w-[48px] bg-[#544b47]" />
    <div className="absolute left-[441px] top-[38px] h-[2px] w-[48px] bg-[#76b9ed]" />
    <svg className="absolute left-[453px] top-[8px]" width="24" height="23" viewBox="0 0 24 23">
      <rect x="5" width="19" height="23" rx="1" fill="#21a366" />
      <rect x="14" width="10" height="6" fill="#33c481" />
      <rect x="14" y="12" width="10" height="6" fill="#107c41" />
      <rect x="5" y="12" width="9" height="11" fill="#185c37" />
      <rect x="14" y="18" width="10" height="5" fill="#0e5c2f" />
      <rect y="5" width="13" height="13" rx="1" fill="#107c41" />
      <text x="3.500" y="15.500" fontSize="11" fontWeight="700" fontFamily="Open Sans" fill="#fff">X</text>
    </svg>
    {/* zalo */}
    <div className="absolute left-[502px] top-[9px] flex h-[23px] w-[24px] items-start justify-start rounded-[7px] bg-white pl-[2px] text-[8px] font-bold leading-[13px] text-[#1a6fe8]">Zalo</div>
    <div className="absolute left-[512px] top-[16px] flex h-[16px] w-[16px] items-center justify-center rounded-full bg-[#e8202a] text-[9px] font-bold">5+</div>
    <div className="absolute left-[494px] top-[38px] h-[2px] w-[40px] bg-[#76b9ed]" />
    {/* chrome */}
    <svg className="absolute left-[551px] top-[8px]" width="26" height="26" viewBox="0 0 26 26">
      <path d="M12 0a12 12 0 0 1 10.400 6H12a6 6 0 0 0-5.500 3.500L3 3.700A12 12 0 0 1 12 0z" fill="#e33b2e" />
      <path d="M22.400 6A12 12 0 0 1 12 24l5-9a6 6 0 0 0 0-9z" fill="#fbc116" />
      <path d="M3 3.700L8 12.500a6 6 0 0 0 4 5.500L12 24A12 12 0 0 1 3 3.700z" fill="#2da94f" />
      <circle cx="12" cy="12" r="5" fill="#4285f4" />
      <circle cx="19" cy="18" r="7" fill="#8a6a5a" />
      <circle cx="19" cy="16" r="3" fill="#d84a6a" />
      <rect x="16" y="18" width="6" height="6" fill="#6a9a4a" />
    </svg>
    <div className="absolute left-[543px] top-[38px] h-[2px] w-[40px] bg-[#76b9ed]" />

    {/* tray */}
    <svg className="absolute left-[1069px] top-[16px]" width="12" height="7" viewBox="0 0 12 7" fill="none" stroke="#fff" strokeWidth="1.200"><path d="M.5 6.500L6 1l5.500 5.500" /></svg>
    <svg className="absolute left-[1091px] top-[12px]" width="15" height="17" viewBox="0 0 15 17">
      <rect width="15" height="17" rx="3" fill="#d9a040" />
      <rect x="2" y="2" width="11" height="13" fill="#dfeaf2" />
      <rect x="3" y="4" width="9" height="2" fill="#cc6a6a" />
      <rect x="3" y="8" width="5" height="4" fill="#6aaa6a" />
      <path d="M3 14h9" stroke="#3a6aa0" />
    </svg>
    <svg className="absolute left-[1117px] top-[13px]" width="15" height="15" viewBox="0 0 15 15" fill="none" stroke="#c4c4c4">
      <path d="M1 14a13 13 0 0 1 13-13M1 14a9 9 0 0 1 9-9M4 14a6 6 0 0 1 6-6" strokeDasharray="2 1" />
      <circle cx="12.500" cy="12.500" r="1.500" fill="#fff" stroke="none" />
    </svg>
    <svg className="absolute left-[1141px] top-[11px]" width="12" height="18" viewBox="0 0 12 18" fill="none" stroke="#e0e0e0">
      <rect x=".5" y="5.500" width="7" height="7" rx="1" /><path d="M8 8l3-2v6l-3-2M2 2h6M2 16h6" />
    </svg>
    <svg className="absolute left-[1163px] top-[12px]" width="16" height="16" viewBox="0 0 16 16" fill="none" stroke="#d8d8d8">
      <path d="M1 5.500h3L8 2v12l-4-3.500H1zM10.500 6a3 3 0 0 1 0 4M12.500 4a6 6 0 0 1 0 8M14.500 2.500a8 8 0 0 1 0 11" />
    </svg>
    <svg className="absolute left-[1187px] top-[14px]" width="17" height="13" viewBox="0 0 17 13" fill="none">
      <path d="M1 1v2M4 1v2M0 3.500h5V6a2 2 0 0 1-4 0M2.500 8v3H7" stroke="#fff" />
      <rect x="6.500" y="3.500" width="10" height="8" stroke="#fff" /><rect x="8" y="5" width="7" height="5" fill="#fff" />
    </svg>
    <T className="left-[1213px] top-[19px] text-[11.200px]">ENG</T>
    <T className="left-[1277px] top-[10px] -translate-x-1/2 text-[11.200px]">22:02</T>
    <T className="left-[1277px] top-[28px] -translate-x-1/2 text-[11.200px]">30/05/2025</T>
    <svg className="absolute left-[1325px] top-[12px]" width="16" height="14" viewBox="0 0 16 14">
      <path d="M0 0h16v11H6l-3 3v-3H0z" fill="#fff" />
      <path d="M3 3.500h10M3 6h10M3 8.500h7" stroke="#333" />
    </svg>
    <div className="absolute left-[1333px] top-[18px] flex h-[16px] w-[16px] items-center justify-center rounded-full border border-[#8a8a8a] bg-[#3d3633] text-[10px] font-bold">2</div>
  </div>
);

export default function App() {
  return (
    <div className="relative h-[768px] w-[1366px] overflow-hidden bg-[#e6e6e6]">
      <TitleBar />
      <Ribbon />
      <RibbonContent />
      <FormulaBar />
      <Sheet />
      <TabBar />
      <StatusBar />
      <FilterMenu />
      <Taskbar />
    </div>
  );
}
